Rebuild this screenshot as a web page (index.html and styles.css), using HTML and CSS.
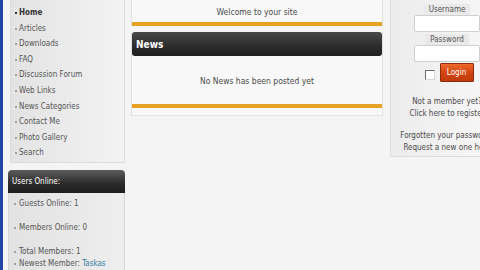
FILE: index.html
```html
<!DOCTYPE html>
<html>
<head>
<meta charset="utf-8">
<link rel="stylesheet" href="styles.css">
</head>
<body>
<div class="page">
  <aside class="left">
    <nav class="menu">
      <ul>
        <li class="active">Home</li>
        <li>Articles</li>
        <li>Downloads</li>
        <li>FAQ</li>
        <li>Discussion Forum</li>
        <li>Web Links</li>
        <li>News Categories</li>
        <li>Contact Me</li>
        <li>Photo Gallery</li>
        <li>Search</li>
      </ul>
    </nav>
    <div class="block">
      <div class="block-head">Users Online:</div>
      <ul class="block-body">
        <li class="spaced">Guests Online: 1</li>
        <li class="spaced">Members Online: 0</li>
        <li>Total Members: 1</li>
        <li>Newest Member: <a class="member">Taskas</a></li>
      </ul>
    </div>
  </aside>
  <main class="center">
    <section class="panel welcome">
      <div class="panel-text">Welcome to your site</div>
      <div class="bar"></div>
    </section>
    <section class="panel news">
      <div class="dark-head">News</div>
      <div class="panel-text news-text">No News has been posted yet</div>
      <div class="bar"></div>
    </section>
  </main>
  <aside class="right">
    <div class="login">
      <div class="label">Username</div>
      <div class="input"></div>
      <div class="label">Password</div>
      <div class="input"></div>
      <div class="login-row">
        <span class="check"></span>
        <span class="btn">Login</span>
      </div>
      <p class="note">Not a member yet?<br>Click here to register</p>
      <p class="note">Forgotten your password?<br>Request a new one here</p>
    </div>
  </aside>
</div>
</body>
</html>
```
FILE: styles.css
```css
html, body {
  margin: 0;
  padding: 0;
}
body {
  width: 480px;
  height: 270px;
  overflow: hidden;
  background: #f4f4f4;
  font-family: "DejaVu Sans Condensed", "DejaVu Sans", sans-serif;
  font-size: 8px;
  color: #4a4a4a;
}
.page {
  display: flex;
  align-items: flex-start;
  height: 270px;
  border-left: 3px solid #2443a6;
  padding-left: 5px;
  box-sizing: border-box;
}
.left {
  width: 117px;
  flex: none;
  display: flex;
  flex-direction: column;
  height: 270px;
}
.menu {
  margin-left: 2px;
  height: 163px;
  box-sizing: border-box;
  border: 1px solid #dcdcdc;
  border-top: none;
  background: linear-gradient(to right, #e3e3e3, #f3f3f3);
}
.menu ul {
  list-style: none;
  margin: 0;
  padding: 5px 0 0 5px;
}
.menu li {
  line-height: 15.6px;
  color: #555;
  position: relative;
  padding-left: 3px;
}
.menu li::before,
.block-body li::before {
  content: "";
  position: absolute;
  left: -1px;
  top: 7px;
  width: 2px;
  height: 2px;
  background: #a0a0a0;
}
.menu li.active {
  font-weight: bold;
  color: #333;
}
.menu li.active::before {
  background: #333;
}
.block {
  margin-top: 7px;
  flex: 1;
  display: flex;
  flex-direction: column;
}
.block-head {
  height: 23px;
  line-height: 24px;
  padding-left: 4px;
  color: #fff;
  border-radius: 4px 4px 0 0;
  background: linear-gradient(#5c5c5c, #2b2b2b 60%, #1e1e1e);
}
.block-body {
  flex: 1;
  list-style: none;
  margin: 0;
  padding: 5px 0 0 8px;
  background: linear-gradient(to right, #e2e2e2, #eeeeee);
  border-left: 1px solid #d6d6d6;
  border-right: 1px solid #d6d6d6;
}
.block-body li {
  line-height: 12px;
  position: relative;
  padding-left: 2px;
  color: #555;
}
.block-body li::before {
  left: -3px;
  top: 5px;
}
.block-body li.spaced {
  margin-bottom: 12px;
}
.member {
  color: #2f7f9f;
}
.center {
  margin-left: 6px;
  width: 252px;
  flex: none;
  display: flex;
  flex-direction: column;
  gap: 6px;
  font-size: 8.5px;
}
.panel {
  background: #f8f8f8;
  border-left: 1px solid #e0e0e0;
  border-right: 1px solid #e0e0e0;
}
.panel-text {
  text-align: center;
  color: #4a4a4a;
}
.welcome .panel-text {
  height: 22px;
  line-height: 24px;
}
.bar {
  height: 4px;
  background: #e6a224;
}
.dark-head {
  height: 24px;
  line-height: 25px;
  padding-left: 4px;
  color: #fff;
  font-weight: bold;
  font-size: 10px;
  border-radius: 3px;
  background: linear-gradient(#4a4a4a, #2e2e2e 55%, #1f1f1f);
}
.news-text {
  height: 48px;
  line-height: 50px;
}
.news {
  padding-bottom: 7px;
  border-bottom: 1px solid #e3e3e3;
}
.right {
  margin-left: 7px;
  width: 114px;
  flex: none;
}
.login {
  height: 157px;
  box-sizing: border-box;
  border: 1px solid #dedede;
  border-top: none;
  background: linear-gradient(to right, #ececec, #f8f8f8);
  display: flex;
  flex-direction: column;
  align-items: center;
  padding-top: 4px;
}
.label {
  line-height: 11px;
  height: 11px;
  padding: 0 5px;
  color: #555;
  background: #e9e9e9;
}
.input {
  width: 64px;
  height: 15px;
  background: #fff;
  border: 1px solid #cfcfcf;
  border-radius: 2px;
  margin-bottom: 2px;
}
.login-row {
  display: flex;
  align-items: center;
  gap: 5px;
  margin-top: -1px;
  margin-left: 4px;
}
.check {
  width: 8px;
  height: 8px;
  background: #fff;
  border: 1px solid;
  border-color: #6b6b6b #d8d8d8 #d8d8d8 #6b6b6b;
  margin-top: 5px;
}
.btn {
  width: 32px;
  height: 17px;
  line-height: 17px;
  text-align: center;
  color: #fff;
  border: 1px solid #8c2c0c;
  background: linear-gradient(#f06a2a, #d24512 50%, #c23a0c);
  border-radius: 1px;
}
.note {
  margin: 14px 0 0 0;
  text-align: center;
  line-height: 12px;
  color: #4a4a4a;
  white-space: nowrap;
}
.note + .note {
  margin-top: 10px;
}
```
